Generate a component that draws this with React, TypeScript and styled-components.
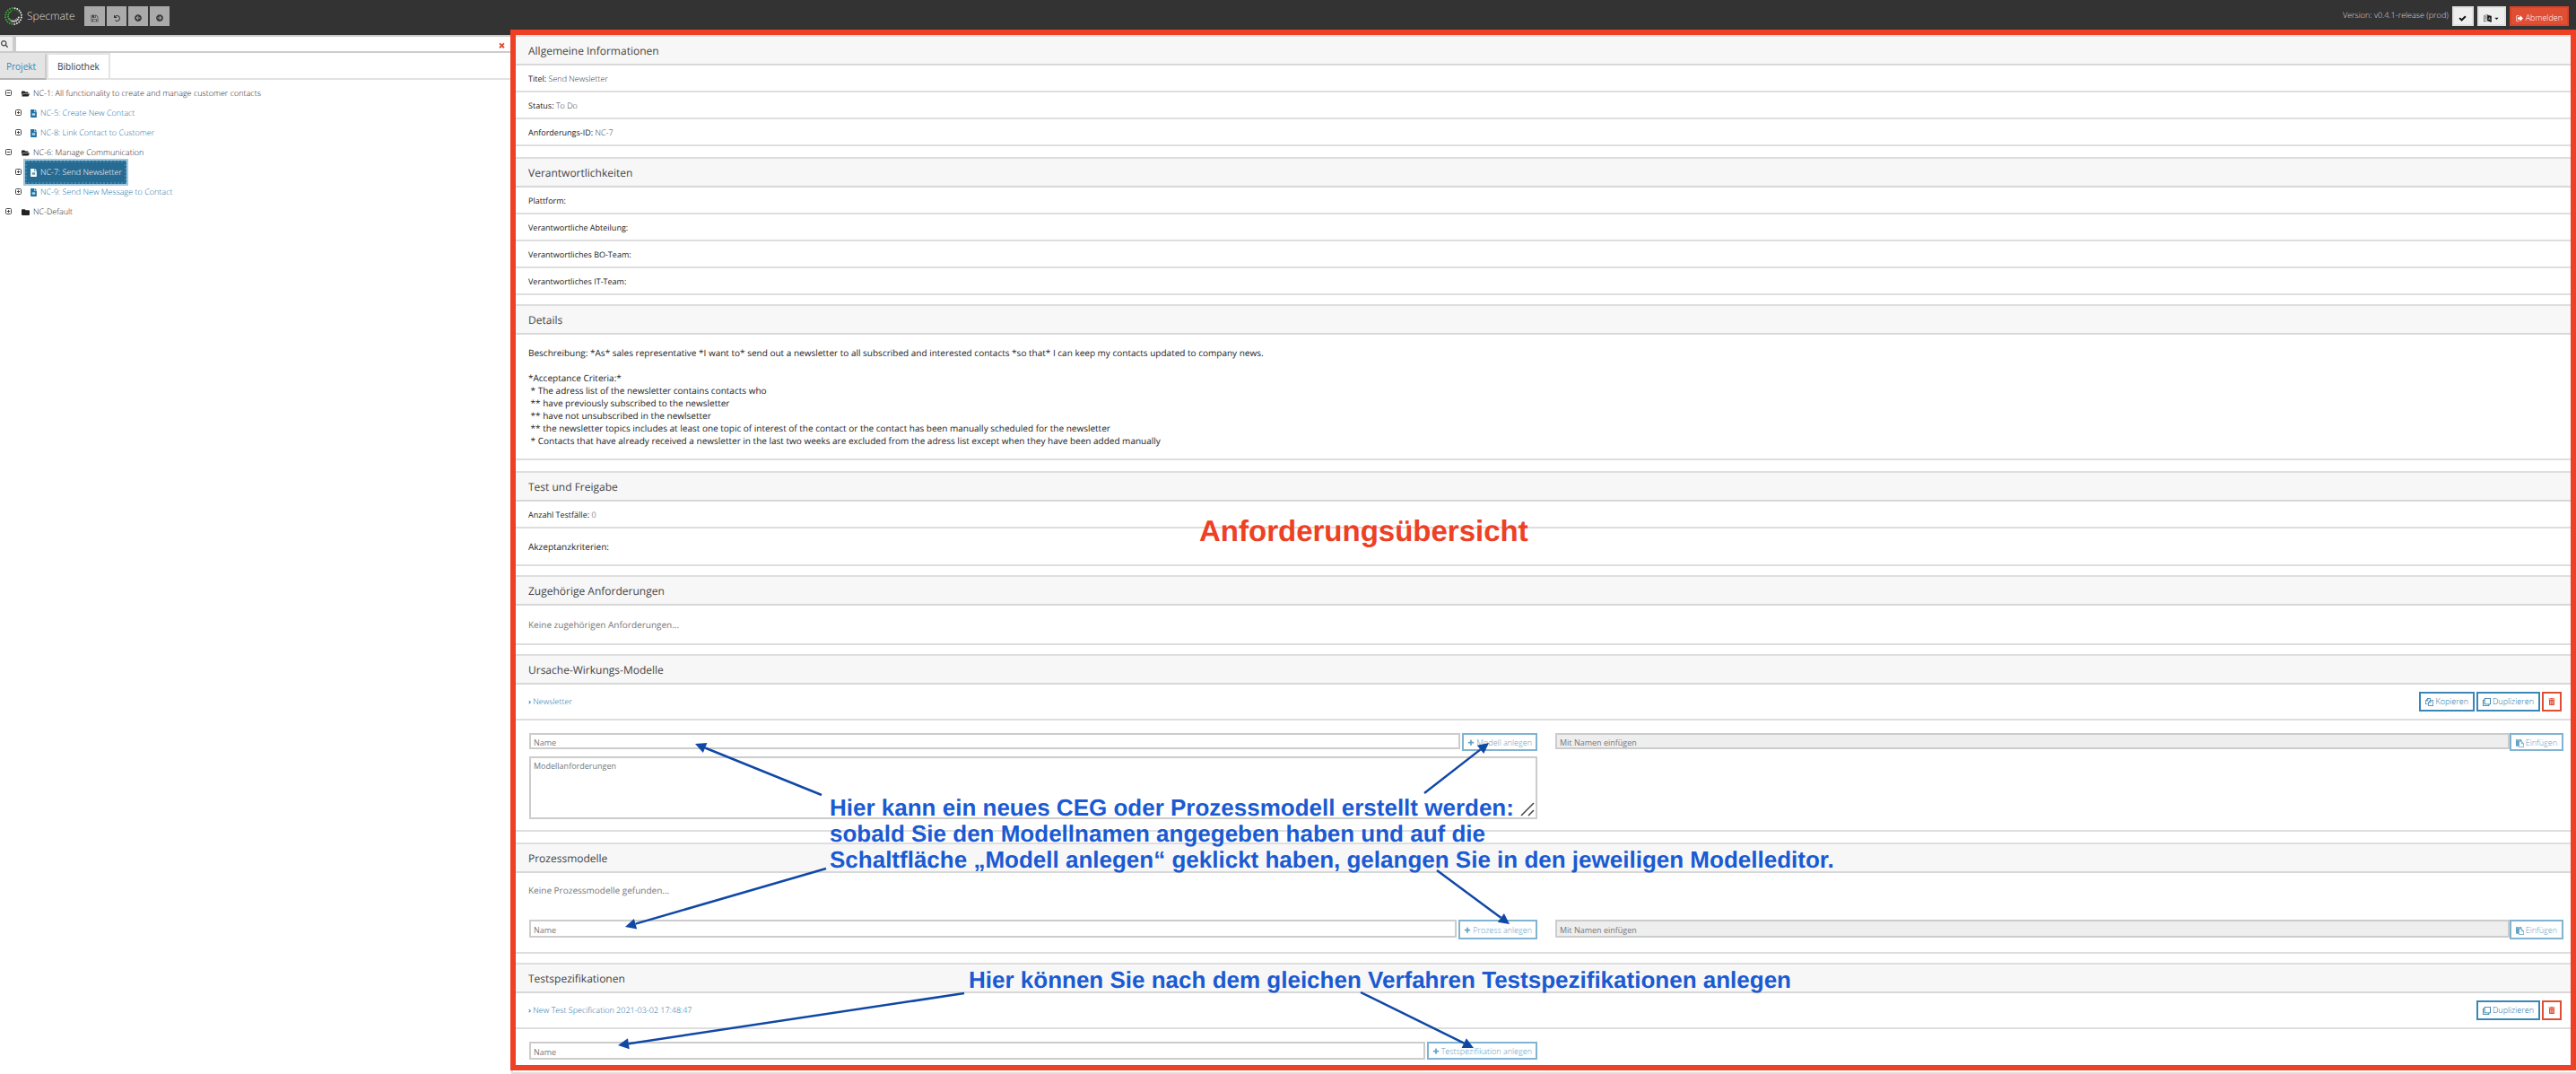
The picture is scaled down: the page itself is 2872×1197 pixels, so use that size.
import React from "react";
import styled, { createGlobalStyle, css } from "styled-components";
import {
  FaUndo,
  FaArrowCircleLeft,
  FaArrowCircleRight,
  FaSearch,
  FaFolderOpen,
  FaFolder,
  FaFileAlt,
  FaRegClone,
  FaTrashAlt,
  FaCaretDown,
} from "react-icons/fa";

const GlobalStyle = createGlobalStyle`
  *, *::before, *::after { box-sizing: border-box; }
  body {
    margin: 0;
    background: #fff;
    color: #222;
    font-family: "Open Sans", "Noto Sans", sans-serif;
    font-size: 9px;
    font-weight: 300;
    line-height: 14px;
    text-rendering: geometricPrecision;
  }
  button, input, textarea { font: inherit; margin: 0; border-radius: 0; }
  h2, p, ul { margin: 0; padding: 0; }
  a { color: #1b72a6; text-decoration: none; }
`;

/* ---------- icons ---------- */

const paths = {
  save: "M512 1536h768v-384h-768v384zm896 0h128v-896q0-14-10-38.5t-20-34.5l-281-281q-10-10-34-20t-39-10v416q0 40-28 68t-68 28h-576q-40 0-68-28t-28-68v-416h-128v1280h128v-416q0-40 28-68t68-28h832q40 0 68 28t28 68v416zm-384-928v-320q0-13-9.5-22.5t-22.5-9.5h-192q-13 0-22.5 9.5t-9.5 22.5v320q0 13 9.5 22.5t22.5 9.5h192q13 0 22.5-9.5t9.5-22.5zm640 32v928q0 40-28 68t-68 28h-1344q-40 0-68-28t-28-68v-1344q0-40 28-68t68-28h928q40 0 88 20t76 48l280 280q28 28 48 76t20 88z",
  check: "M1671 566q0 40-28 68l-724 724-136 136q-28 28-68 28t-68-28l-136-136-362-362q-28-28-28-68t28-68l136-136q28-28 68-28t68 28l294 295 656-657q28-28 68-28t68 28l136 136q28 28 28 68z",
  times: "M1490 1322q0 40-28 68l-136 136q-28 28-68 28t-68-28l-294-294-294 294q-28 28-68 28t-68-28l-136-136q-28-28-28-68t28-68l294-294-294-294q-28-28-28-68t28-68l136-136q28-28 68-28t68 28l294 294 294-294q28-28 68-28t68 28l136 136q28 28 28 68t-28 68l-294 294 294 294q28 28 28 68z",
  plus: "M1600 736v192q0 40-28 68t-68 28h-416v416q0 40-28 68t-68 28h-192q-40 0-68-28t-28-68v-416h-416q-40 0-68-28t-28-68v-192q0-40 28-68t68-28h416v-416q0-40 28-68t68-28h192q40 0 68 28t28 68v416h416q40 0 68 28t28 68z",
  files: "M1696 384q40 0 68 28t28 68v1216q0 40-28 68t-68 28h-960q-40 0-68-28t-28-68v-288h-544q-40 0-68-28t-28-68v-672q0-40 20-88t48-76l408-408q28-28 76-48t88-20h416q40 0 68 28t28 68v328q68-40 128-40h416zm-544 213l-299 299h299v-299zm-640-384l-299 299h299v-299zm196 647l316-316v-416h-384v416q0 40-28 68t-68 28h-416v640h512v-256q0-40 20-88t48-76zm956 804v-1152h-384v416q0 40-28 68t-68 28h-416v640h896z",
  paste: "M768 1664h896v-640h-416q-40 0-68-28t-28-68v-416h-384v1152zm256-1440v-64q0-13-9.5-22.5t-22.5-9.5h-704q-13 0-22.5 9.5t-9.5 22.5v64q0 13 9.5 22.5t22.5 9.5h704q13 0 22.5-9.5t9.5-22.5zm256 672h299l-299-299v299zm512 128v672q0 40-28 68t-68 28h-960q-40 0-68-28t-28-68v-160h-544q-40 0-68-28t-28-68v-1344q0-40 28-68t68-28h1088q40 0 68 28t28 68v328q21 13 36 28l408 408q28 28 48 76t20 88z",
  signOut: "M640 1440q0 4 1 20t.5 26.5-3 23.5-10 19.5-20.5 6.5h-320q-119 0-203.5-84.5t-84.5-203.5v-704q0-119 84.5-203.5t203.5-84.5h320q13 0 22.5 9.5t9.5 22.5q0 4 1 20t.5 26.5-3 23.5-10 19.5-20.5 6.5h-320q-66 0-113 47t-47 113v704q0 66 47 113t113 47h312l11.5 1 11.5 3 8 5.5 7 9 2 13.5zm928-544q0 26-19 45l-544 544q-19 19-45 19t-45-19-19-45v-288h-448q-26 0-45-19t-19-45v-384q0-26 19-45t45-19h448v-288q0-26 19-45t45-19 45 19l544 544q19 19 19 45z",
};

function Glyph({ name, size = 9 }: { name: keyof typeof paths; size?: number }) {
  return (
    <svg width={size} height={size} viewBox="0 0 1792 1792" fill="currentColor" aria-hidden="true">
      <path d={paths[name]} />
    </svg>
  );
}

function ToggleIcon({ open }: { open?: boolean }) {
  return (
    <svg width="8" height="8" viewBox="0 0 8 8" fill="none" stroke="currentColor" aria-hidden="true">
      <rect x="0.5" y="0.5" width="6" height="6" rx="1" />
      <path d={open ? "M2 3.5 H5" : "M2 3.5 H5 M3.5 2 V5"} />
    </svg>
  );
}

function LanguageIcon() {
  return (
    <svg width="9" height="9" viewBox="0 0 18 18" fill="none" stroke="currentColor" aria-hidden="true">
      <path d="M1 3 L9 1 V14 L1 16 Z" strokeWidth="1" />
      <path d="M3 6 H7 M5 4 V6 M3 12 Q6 10 6 6 M4 8 L7 11" strokeWidth="1" />
      <path d="M9 2 L17 4 V17 L9 14 Z" fill="currentColor" />
      <path d="M11 12 L13 7 L15 13 M12 10 H14" stroke="#eee" strokeWidth="1" />
    </svg>
  );
}

const outerDots = Array.from({ length: 20 }, (_, i) => (i * 360) / 20 - 80);
const innerDots = Array.from({ length: 16 }, (_, i) => (i * 360) / 16 - 30);

/* Two rings of dots: green on the left half, white on the right. */
function Logo() {
  const dot = (angle: number, radius: number, size: number, first: number, last: number) => {
    const turn = (angle + 360) % 360;
    const x = 11 + radius * Math.cos((turn * Math.PI) / 180);
    const y = 11 + radius * Math.sin((turn * Math.PI) / 180);
    const green = turn > first && turn < last;
    return <circle key={`${radius}-${turn}`} cx={x} cy={y} r={size} fill={green ? "#3fa53c" : "#e6e6e6"} />;
  };
  return (
    <svg width="22" height="22" viewBox="0 0 22 22" fill="none" aria-hidden="true">
      {outerDots.map((a) => dot(a, 9, 1, 95, 275))}
      {innerDots.filter((a) => (a + 360) % 360 < 260).map((a) => dot(a, 6, 1, 120, 260))}
      <path d="M7 6 A6 6 0 0 1 17 8" stroke="#2d6e2c" strokeWidth="1" />
      <path d="M6 13 A5 5 0 0 0 15 13" stroke="#8c8c8c" strokeWidth="1" />
    </svg>
  );
}

/* ---------- page frame ---------- */

const Page = styled.div`
  position: relative;
  display: flex;
  flex-direction: column;
`;

const TopBar = styled.header`
  display: flex;
  align-items: flex-start;
  height: 39px;
  padding: 7px 8px 0 4px;
  background: #333;
  color: #ddd;
`;

const Brand = styled.div`
  display: flex;
  align-items: center;
  gap: 4px;
  width: 90px;
  height: 22px;
  font-size: 12px;
`;

const Tools = styled.div`
  display: flex;
  gap: 2px;
`;

const BarEnd = styled.div`
  display: flex;
  gap: 4px;
  margin-left: auto;
`;

const Version = styled.span`
  line-height: 20px;
`;

const BarButton = styled.button<{ $kind: "tool" | "light" | "danger" }>`
  display: inline-flex;
  align-items: center;
  justify-content: center;
  gap: 2px;
  height: 22px;
  min-width: ${(p) => (p.$kind === "tool" ? 22 : 24)}px;
  padding: 4px 5px 0;
  border: 2px solid;
  white-space: nowrap;
  ${(p) =>
    p.$kind === "tool"
      ? css`background: #aaa; border-color: #aaa; color: #333;`
      : p.$kind === "light"
      ? css`background: #eee; border-color: #e0e0e0; color: #111;`
      : css`background: #e04e33; border-color: #d8432a; color: #fff;`}
`;

const Columns = styled.div`
  display: grid;
  grid-template-columns: 570px minmax(0, 1fr);
`;

/* ---------- sidebar ---------- */

const Sidebar = styled.aside`
  min-width: 0;
  border-top: 2px solid #ccc;
`;

const SearchBar = styled.form`
  display: flex;
  align-items: stretch;
  height: 18px;
  border-bottom: 2px solid #ccc;
`;

const SearchIcon = styled.label`
  display: flex;
  align-items: center;
  width: 18px;
  padding-left: 1px;
  border-right: 4px solid #ccc;
  background: #eee;
  color: #444;
`;

const SearchInput = styled.input`
  flex: 1;
  min-width: 0;
  padding: 0 4px;
  border: 0;
  outline: 0;
`;

const ClearButton = styled.button`
  display: flex;
  align-items: center;
  padding: 3px 6px 0 4px;
  border: 0;
  background: none;
  color: #e04e33;
`;

const TabBar = styled.div`
  display: flex;
  height: 30px;
  border-bottom: 2px solid #e2e2e2;
`;

const Tab = styled.button<{ $active?: boolean }>`
  height: 30px;
  padding: 0 10px;
  border: 2px solid #e4e4e4;
  background: #fff;
  color: #373a3c;
  font-size: 10px;
  font-weight: 400;
  ${(p) =>
    p.$active &&
    css`
      padding-left: 7px;
      border-color: #e4e4e4 #ccc #b4b4b4;
      border-left: 0;
      background: #e4e4e4;
      color: #3a87b7;
    `}
`;

const Tree = styled.ul`
  padding-top: 4px;
  list-style: none;
`;

const TreeRow = styled.li<{ $depth: number }>`
  display: flex;
  align-items: center;
  gap: ${(p) => (p.$depth ? 3 : 8)}px;
  height: 22px;
  padding-left: ${(p) => (p.$depth ? 17 : 6)}px;
`;

const Toggle = styled.button`
  display: flex;
  padding: 0;
  border: 0;
  background: none;
  color: #444;
`;

const Node = styled.span`
  display: inline-flex;
  align-items: center;
  gap: 4px;
  padding: 0 2px;
  color: #222;
`;

const NodeLink = styled.a<{ $selected?: boolean }>`
  display: inline-flex;
  align-items: center;
  gap: 3px;
  height: 26px;
  padding: 0 3px;
  border: 2px solid transparent;
  ${(p) =>
    p.$selected &&
    css`
      border: 2px dotted #3a87b7;
      outline: 2px solid #a4c8dc;
      background: #286b92;
      color: #fff;
    `}
`;

/* ---------- detail cards ---------- */

const Main = styled.main`
  display: flex;
  flex-direction: column;
  min-width: 0;
`;

const Card = styled.section<{ $loose?: boolean }>`
  margin-top: ${(p) => (p.$loose ? 12 : 10)}px;
  border: 2px solid #dedede;
  border-right: 0;
  &:first-child { margin-top: 0; }
`;

const CardTitle = styled.h2`
  height: 32px;
  padding: 0 17px;
  border-bottom: 2px solid #d8d8d8;
  background: #f7f7f7;
  color: #444;
  font-size: 12px;
  font-weight: 400;
  line-height: 31px;
`;

const Line = styled.div`
  display: flex;
  align-items: center;
  justify-content: space-between;
  min-height: 28px;
  padding: 2px 16px 0 17px;
  color: #333;
  & + & { border-top: 2px solid #dedede; min-height: 30px; }
`;

const Label = styled.span`
  color: #222;
  font-weight: 400;
`;

const ActionLine = styled(Line)`
  min-height: 38px;
  padding-top: 0;
`;

const Marker = styled.span`
  font-weight: 600;
`;

const Body = styled.div`
  padding: 13px 17px;
  font-size: 10px;
  font-weight: 400;
  white-space: pre-wrap;
`;

const Criteria = styled(Body)`
  border-top: 2px solid #dedede;
`;

const Muted = styled.p<{ $gap?: boolean }>`
  padding: ${(p) => (p.$gap ? "12px 17px" : "14px 17px")};
  color: #777;
  font-size: 10px;
  font-weight: 400;
`;

const Forms = styled.div<{ $divided?: boolean; $end: number }>`
  display: grid;
  grid-template-columns: minmax(0, 1fr) minmax(0, 1fr);
  gap: 20px;
  align-items: start;
  padding: 14px 14px ${(p) => p.$end}px 18px;
  ${(p) => p.$divided && css`border-top: 2px solid #dedede;`}
`;

const Stack = styled.form`
  display: flex;
  flex-direction: column;
  gap: 6px;
`;

const FieldRow = styled.div<{ $tight?: boolean }>`
  display: flex;
  align-items: flex-start;
  gap: ${(p) => (p.$tight ? 0 : 2)}px;
`;

const Field = styled.input<{ $short?: boolean }>`
  flex: 1;
  min-width: 0;
  height: ${(p) => (p.$short ? 18 : 20)}px;
  padding: 2px 3px 0;
  border: 2px solid #ccc;
  background: #fff;
  color: #777;
  font-weight: 400;
  &::placeholder { color: #777; opacity: 1; }
  &:disabled { background: #eee; }
`;

const AreaBox = styled.div`
  position: relative;
`;

const Area = styled.textarea`
  display: block;
  width: 100%;
  height: 70px;
  padding: 2px 3px;
  border: 2px solid #ccc;
  color: #777;
  font-weight: 400;
  resize: none;
  &::placeholder { color: #777; opacity: 1; }
`;

const Grip = styled.svg`
  position: absolute;
  right: 3px;
  bottom: 3px;
`;

const Buttons = styled.div`
  display: flex;
  gap: 2px;
`;

const OutlineButton = styled.button<{ $danger?: boolean; $height?: number; $narrow?: boolean }>`
  display: inline-flex;
  align-items: center;
  justify-content: center;
  gap: 2px;
  height: ${(p) => p.$height ?? 22}px;
  min-width: 22px;
  padding: 0 ${(p) => (p.$narrow ? 4 : 5)}px;
  border: 2px solid ${(p) => (p.$danger ? "#e04e33" : "#3a87b7")};
  background: #fff;
  color: ${(p) => (p.$danger ? "#e04e33" : "#1b72a6")};
  white-space: nowrap;
  &:disabled { border-color: #80b4d0; color: #62a3c6; padding-top: 2px; }
`;

/* ---------- annotation layer ---------- */

const Highlight = styled.div`
  position: absolute;
  inset: 33px 0 4px 569px;
  border: 6px solid #ee4024;
  pointer-events: none;
`;

const Note = styled.p<{ $x: number; $y: number; $big?: boolean }>`
  position: absolute;
  left: ${(p) => p.$x}px;
  top: ${(p) => p.$y}px;
  color: ${(p) => (p.$big ? "#ee4024" : "#1a5ad2")};
  font-family: "Liberation Sans", Arial, sans-serif;
  font-size: ${(p) => (p.$big ? 33 : 26)}px;
  font-weight: 700;
  line-height: ${(p) => (p.$big ? 38 : 29)}px;
  white-space: pre;
  pointer-events: none;
`;

const ArrowLayer = styled.svg`
  position: absolute;
  left: 0;
  top: 0;
  pointer-events: none;
`;

const arrows = [
  [916, 886, 775, 829],
  [1588, 884, 1660, 828],
  [921, 968, 697, 1033],
  [1602, 970, 1683, 1030],
  [1075, 1107, 689, 1165],
  [1517, 1106, 1643, 1168],
];

function Arrows() {
  return (
    <ArrowLayer width="2100" height="1190" aria-hidden="true">
      {arrows.map(([x1, y1, x2, y2]) => {
        const length = Math.hypot(x2 - x1, y2 - y1);
        const ux = (x2 - x1) / length;
        const uy = (y2 - y1) / length;
        const bx = x2 - ux * 12;
        const by = y2 - uy * 12;
        return (
          <g key={`${x1}-${y1}`}>
            <line x1={x1} y1={y1} x2={bx} y2={by} stroke="#1048a6" strokeWidth="2.5" />
            <polygon
              fill="#1048a6"
              points={`${x2},${y2} ${bx - uy * 6},${by + ux * 6} ${bx + uy * 6},${by - ux * 6}`}
            />
          </g>
        );
      })}
    </ArrowLayer>
  );
}

/* ---------- content ---------- */

const tree = [
  { depth: 0, open: true, label: "NC-1: All functionality to create and manage customer contacts" },
  { depth: 1, label: "NC-5: Create New Contact" },
  { depth: 1, label: "NC-8: Link Contact to Customer" },
  { depth: 0, open: true, label: "NC-6: Manage Communication" },
  { depth: 1, label: "NC-7: Send Newsletter", selected: true },
  { depth: 1, label: "NC-9: Send New Message to Contact" },
  { depth: 0, open: false, label: "NC-Default" },
];

const description = `Beschreibung: *As* sales representative *I want to* send out a newsletter to all subscribed and interested contacts *so that* I can keep my contacts updated to company news.

*Acceptance Criteria:*
 * The adress list of the newsletter contains contacts who
 ** have previously subscribed to the newsletter
 ** have not unsubscribed in the newlsetter
 ** the newsletter topics includes at least one topic of interest of the contact or the contact has been manually scheduled for the newsletter
 * Contacts that have already received a newsletter in the last two weeks are excluded from the adress list except when they have been added manually`;

function PropertyLines({ items }: { items: [string, string?][] }) {
  return (
    <>
      {items.map(([label, value]) => (
        <Line key={label}>
          <span>
            <Label>{label}:</Label> {value}
          </span>
        </Line>
      ))}
    </>
  );
}

function PasteForm({ short, height }: { short?: boolean; height: number }) {
  return (
    <FieldRow as="form" $tight>
      <Field $short={short} placeholder="Mit Namen einfügen" aria-label="Mit Namen einfügen" disabled />
      <OutlineButton type="button" disabled $height={height}>
        <Glyph name="paste" />
        Einfügen
      </OutlineButton>
    </FieldRow>
  );
}

function CreateRow({ action, short, height }: { action: string; short?: boolean; height: number }) {
  return (
    <FieldRow>
      <Field $short={short} placeholder="Name" aria-label="Name" />
      <OutlineButton type="button" disabled $narrow $height={height}>
        <Glyph name="plus" size={8} />
        {action}
      </OutlineButton>
    </FieldRow>
  );
}

function ItemActions({ copy }: { copy?: boolean }) {
  return (
    <Buttons>
      {copy && (
        <OutlineButton type="button">
          <Glyph name="files" />
          Kopieren
        </OutlineButton>
      )}
      <OutlineButton type="button">
        <FaRegClone size={9} />
        Duplizieren
      </OutlineButton>
      <OutlineButton type="button" $danger aria-label="Löschen">
        <FaTrashAlt size={8} />
      </OutlineButton>
    </Buttons>
  );
}

export default function App() {
  return (
    <>
      <GlobalStyle />
      <Page>
        <TopBar>
          <Brand>
            <Logo />
            Specmate
          </Brand>
          <Tools>
            <BarButton $kind="tool" aria-label="Speichern"><Glyph name="save" /></BarButton>
            <BarButton $kind="tool" aria-label="Rückgängig"><FaUndo size={7} /></BarButton>
            <BarButton $kind="tool" aria-label="Zurück"><FaArrowCircleLeft size={8} /></BarButton>
            <BarButton $kind="tool" aria-label="Vor"><FaArrowCircleRight size={8} /></BarButton>
          </Tools>
          <BarEnd>
            <Version>Version: v0.4.1-release (prod)</Version>
            <BarButton $kind="light" aria-label="Status"><Glyph name="check" /></BarButton>
            <BarButton $kind="light" aria-label="Sprache">
              <LanguageIcon />
              <FaCaretDown size={7} />
            </BarButton>
            <BarButton $kind="danger">
              <Glyph name="signOut" />
              Abmelden
            </BarButton>
          </BarEnd>
        </TopBar>

        <Columns>
          <Sidebar>
            <SearchBar>
              <SearchIcon htmlFor="search" aria-label="Suche"><FaSearch size={8} /></SearchIcon>
              <SearchInput id="search" />
              <ClearButton type="button" aria-label="Suche leeren"><Glyph name="times" size={9} /></ClearButton>
            </SearchBar>
            <TabBar role="tablist">
              <Tab role="tab" $active>Projekt</Tab>
              <Tab role="tab">Bibliothek</Tab>
            </TabBar>
            <Tree>
              {tree.map((item) => (
                <TreeRow key={item.label} $depth={item.depth}>
                  <Toggle aria-label={item.open ? "Zuklappen" : "Aufklappen"}>
                    <ToggleIcon open={item.open} />
                  </Toggle>
                  {item.depth === 0 ? (
                    <Node>
                      {item.open ? <FaFolderOpen size={9} /> : <FaFolder size={9} />}
                      {item.label}
                    </Node>
                  ) : (
                    <NodeLink href="#" $selected={item.selected}>
                      <FaFileAlt size={9} />
                      {item.label}
                    </NodeLink>
                  )}
                </TreeRow>
              ))}
            </Tree>
          </Sidebar>

          <Main>
            <Card>
              <CardTitle>Allgemeine Informationen</CardTitle>
              <PropertyLines items={[["Titel", "Send Newsletter"], ["Status", "To Do"], ["Anforderungs-ID", "NC-7"]]} />
            </Card>
            <Card $loose>
              <CardTitle>Verantwortlichkeiten</CardTitle>
              <PropertyLines
                items={[
                  ["Plattform"],
                  ["Verantwortliche Abteilung"],
                  ["Verantwortliches BO-Team"],
                  ["Verantwortliches IT-Team"],
                ]}
              />
            </Card>
            <Card>
              <CardTitle>Details</CardTitle>
              <Body>{description}</Body>
            </Card>
            <Card $loose>
              <CardTitle>Test und Freigabe</CardTitle>
              <PropertyLines items={[["Anzahl Testfälle", "0"]]} />
              <Criteria>Akzeptanzkriterien:</Criteria>
            </Card>
            <Card>
              <CardTitle>Zugehörige Anforderungen</CardTitle>
              <Muted>Keine zugehörigen Anforderungen...</Muted>
            </Card>
            <Card>
              <CardTitle>Ursache-Wirkungs-Modelle</CardTitle>
              <ActionLine>
                <a href="#"><Marker>›</Marker> Newsletter</a>
                <ItemActions copy />
              </ActionLine>
              <Forms $divided $end={12}>
                <Stack>
                  <CreateRow action="Modell anlegen" short height={20} />
                  <AreaBox>
                    <Area placeholder="Modellanforderungen" aria-label="Modellanforderungen" />
                    <Grip width="16" height="16" viewBox="0 0 16 16" stroke="#444" strokeWidth="1.5" aria-hidden="true">
                      <path d="M1 15 L15 1 M9 15 L15 9" />
                    </Grip>
                  </AreaBox>
                </Stack>
                <PasteForm short height={20} />
              </Forms>
            </Card>
            <Card $loose>
              <CardTitle>Prozessmodelle</CardTitle>
              <Muted $gap>Keine Prozessmodelle gefunden...</Muted>
              <Forms $end={14}>
                <Stack>
                  <CreateRow action="Prozess anlegen" height={22} />
                </Stack>
                <PasteForm height={22} />
              </Forms>
            </Card>
            <Card>
              <CardTitle>Testspezifikationen</CardTitle>
              <ActionLine>
                <a href="#"><Marker>›</Marker> New Test Specification 2021-03-02 17:48:47</a>
                <ItemActions />
              </ActionLine>
              <Forms $divided $end={14}>
                <Stack>
                  <CreateRow action="Testspezifikation anlegen" height={20} />
                </Stack>
              </Forms>
            </Card>
          </Main>
        </Columns>

        <Highlight />
        <Note $big $x={1337} $y={573}>Anforderungsübersicht</Note>
        <Note $x={925} $y={886}>
          {"Hier kann ein neues CEG oder Prozessmodell erstellt werden:\nsobald Sie den Modellnamen angegeben haben und auf die\nSchaltfläche „Modell anlegen“ geklickt haben, gelangen Sie in den jeweiligen Modelleditor."}
        </Note>
        <Note $x={1080} $y={1078}>
          Hier können Sie nach dem gleichen Verfahren Testspezifikationen anlegen
        </Note>
        <Arrows />
      </Page>
    </>
  );
}
